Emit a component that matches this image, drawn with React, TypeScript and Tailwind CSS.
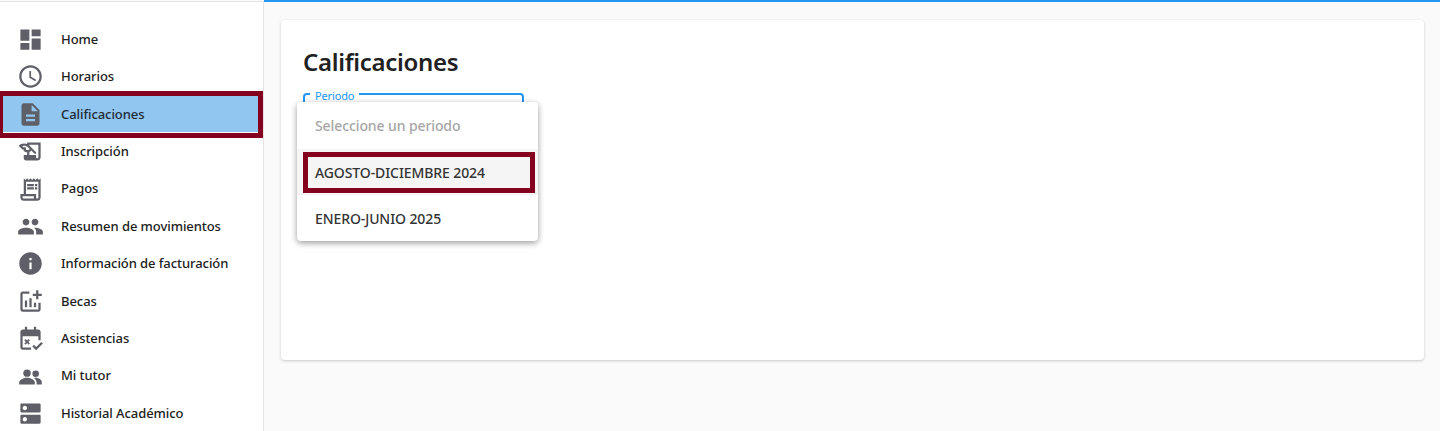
import React from "react";
import {
  MdDashboard,
  MdAccessTime,
  MdDescription,
  MdOutlineHistoryEdu,
  MdOutlineReceiptLong,
  MdPeople,
  MdInfo,
  MdAddchart,
  MdDns,
} from "react-icons/md";

const CalendarCheck = ({ className }: { className?: string }) => (
  <svg viewBox="0 0 24 24" fill="currentColor" className={className}>
    <path d="M7 1.5h2V4h6V1.5h2V4h2c1.1 0 2 .9 2 2v7.5h-2V10H5v10h7.5v2H5c-1.1 0-2-.9-2-2V6c0-1.1.9-2 2-2h2V1.5z" />
    <path d="M7.6 12.4l1.4 1.4 1.4-1.4 1.1 1.1-1.4 1.5 1.4 1.4-1.1 1.1L9 16.1l-1.4 1.4-1.1-1.1L7.9 15l-1.400-1.500 1.100-1.100z" />
    <path d="M17 22.4l-3.400-3.400 1.400-1.400 2 2 4.600-4.600 1.400 1.400-6 6z" />
  </svg>
);

const Tutor = ({ className }: { className?: string }) => (
  <svg viewBox="0 0 24 24" fill="currentColor" className={className}>
    <circle cx="8.9" cy="9" r="3.3" />
    <circle cx="16.6" cy="9.6" r="2.9" />
    <path d="M2 19v-1.800c0-2.300 4.400-4 6.900-4s6.900 1.700 6.900 4V19H2z" />
    <path d="M15.200 13.300c2.800-.5 6.800 1 6.800 3.500V19h-4.600v-1.800c0-1.500-1-2.900-2.200-3.900z" />
  </svg>
);

const items = [
  { label: "Home", icon: MdDashboard },
  { label: "Horarios", icon: MdAccessTime },
  { label: "Calificaciones", icon: MdDescription, active: true },
  { label: "Inscripción", icon: MdOutlineHistoryEdu },
  { label: "Pagos", icon: MdOutlineReceiptLong },
  { label: "Resumen de movimientos", icon: MdPeople },
  { label: "Información de facturación", icon: MdInfo },
  { label: "Becas", icon: MdAddchart },
  { label: "Asistencias", icon: CalendarCheck },
  { label: "Mi tutor", icon: Tutor },
  { label: "Historial Académico", icon: MdDns },
];

const App: React.FC = () => {
  return (
    <div className="flex h-[431px] overflow-hidden bg-[#fafafa] font-['Noto_Sans',sans-serif] text-[#212121]">
      {/* Sidebar */}
      <aside className="mt-px w-[264px] shrink-0 border-t border-r border-[#e4e4e4] bg-white pt-[18.9px]">
        {items.map((item) => (
          <div
            key={item.label}
            className={`relative flex h-[37.4px] items-center pl-[17px] ${item.active ? "text-[#1f2a37]" : ""}`}
          >
            {item.active && (
              <div className="absolute top-[-5px] left-0 h-[47px] w-[263px] border-t-[5px] border-r-[5px] border-b-[5px] border-l-[3px] border-[#85001f] bg-[#90c6f0] shadow-[inset_0_-1px_0_#fff]" />
            )}
            <item.icon className="relative h-[27px] w-[27px] text-[#5f6067]" />
            <span className="relative ml-[17px] text-[13px] font-medium tracking-[-0.07px]">{item.label}</span>
          </div>
        ))}
      </aside>

      {/* Main */}
      <main className="flex-1 border-t-2 border-[#2196f3] pt-[18px] pr-[16px] pl-[17px]">
        <div className="h-[340px] rounded bg-white px-[22px] pt-[27px] shadow-[0_1px_3px_rgba(0,0,0,0.2)]">
          <h1 className="text-[24px] leading-[30px] font-semibold tracking-[-0.3px]">Calificaciones</h1>

          <div className="relative mt-[16px] h-[56px] w-[221px] rounded border-2 border-[#2196f3]">
            <span className="absolute top-[-7px] left-[5px] bg-white px-[5px] text-[11px] leading-[14px] tracking-[-0.15px] text-[#2196f3]">
              <span className="relative top-px">Periodo</span>
            </span>

            <div className="absolute top-[7px] left-[-8px] w-[241px] rounded bg-white text-[14px] font-medium tracking-[-0.1px] shadow-[0_2px_6px_rgba(0,0,0,0.4)]">
              <div className="flex h-[47px] items-center px-[18px] text-[#a6a6a6]">Seleccione un periodo</div>
              <div className="relative flex h-[46px] items-center bg-[#f5f5f5] px-[18px] text-[#333333]">
                <div className="absolute top-[3px] right-[3px] left-[6px] h-[41px] border-[5px] border-[#85001f]" />
                <span className="relative">AGOSTO-DICIEMBRE 2024</span>
              </div>
              <div className="flex h-[46px] items-center px-[18px] text-[#333333]">ENERO-JUNIO 2025</div>
            </div>
          </div>
        </div>
      </main>
    </div>
  );
};

export default App;
